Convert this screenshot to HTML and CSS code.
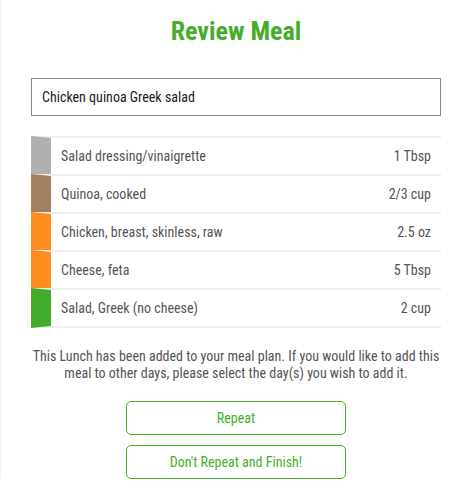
FILE: index.html
```html
<!DOCTYPE html>
<html lang="en">
<head>
  <meta charset="UTF-8">
  <meta name="viewport" content="width=device-width, initial-scale=1.0">
  <title>Review Meal</title>
  <link rel="stylesheet" href="styles.css">
</head>
<body>
  <div class="page">
    <h1>Review Meal</h1>

    <div class="meal-name">Chicken quinoa Greek salad</div>

    <div class="food-list">
      <div class="food-row grey">
        <span>Salad dressing/vinaigrette</span>
        <span>1 Tbsp</span>
      </div>
      <div class="food-row brown">
        <span>Quinoa, cooked</span>
        <span>2/3 cup</span>
      </div>
      <div class="food-row orange">
        <span>Chicken, breast, skinless, raw</span>
        <span>2.5 oz</span>
      </div>
      <div class="food-row orange">
        <span>Cheese, feta</span>
        <span>5 Tbsp</span>
      </div>
      <div class="food-row green">
        <span>Salad, Greek (no cheese)</span>
        <span>2 cup</span>
      </div>
    </div>

    <p class="note">This Lunch has been added to your meal plan. If you would like to add this meal to other days, please select the day(s) you wish to add it.</p>

    <div class="actions">
      <button>Repeat</button>
      <button>Don't Repeat and Finish!</button>
    </div>
  </div>
</body>
</html>
```

FILE: styles.css
```css
body {
  margin: 0;
  font-family: "Roboto Condensed", Roboto, sans-serif;
  font-stretch: 80%;
  color: #555;
  background-color: white;
  border-left: 1px solid #f2f2f2;
}
.page {
  padding: 16px 21px 0 30px;
}
h1 {
  margin: 0;
  text-align: center;
  font-size: 26px;
  line-height: 30px;
  font-weight: bold;
  color: #46ad2a;
}
.meal-name {
  margin-top: 32px;
  height: 36px;
  border: 1px solid #8a8a8a;
  padding: 0 10px;
  display: flex;
  align-items: center;
  font-size: 14px;
  color: #1a1a1a;
}
.food-list {
  margin-top: 20px;
}
.food-row {
  display: flex;
  justify-content: space-between;
  align-items: center;
  height: 36px;
  padding: 0 10px;
  border-top: 2px solid #eee;
  border-left: 20px solid #b0b0b0;
  font-size: 14px;
}
.food-row:last-child {
  border-bottom: 2px solid #eee;
}
.grey { border-left-color: #b0b0b0; }
.brown { border-left-color: #a0805f; }
.orange { border-left-color: #ff8c1e; }
.green { border-left-color: #42ac2a; }
.note {
  margin: 20px 0 0;
  text-align: center;
  font-size: 14px;
  line-height: 17px;
}
.actions {
  margin-top: 19px;
  display: flex;
  flex-direction: column;
  align-items: center;
  gap: 10px;
}
button {
  width: 220px;
  height: 34px;
  background-color: white;
  border: 1px solid #44b02a;
  border-radius: 5px;
  font-family: inherit;
  font-stretch: inherit;
  font-size: 14px;
  color: #44b02a;
}
```
